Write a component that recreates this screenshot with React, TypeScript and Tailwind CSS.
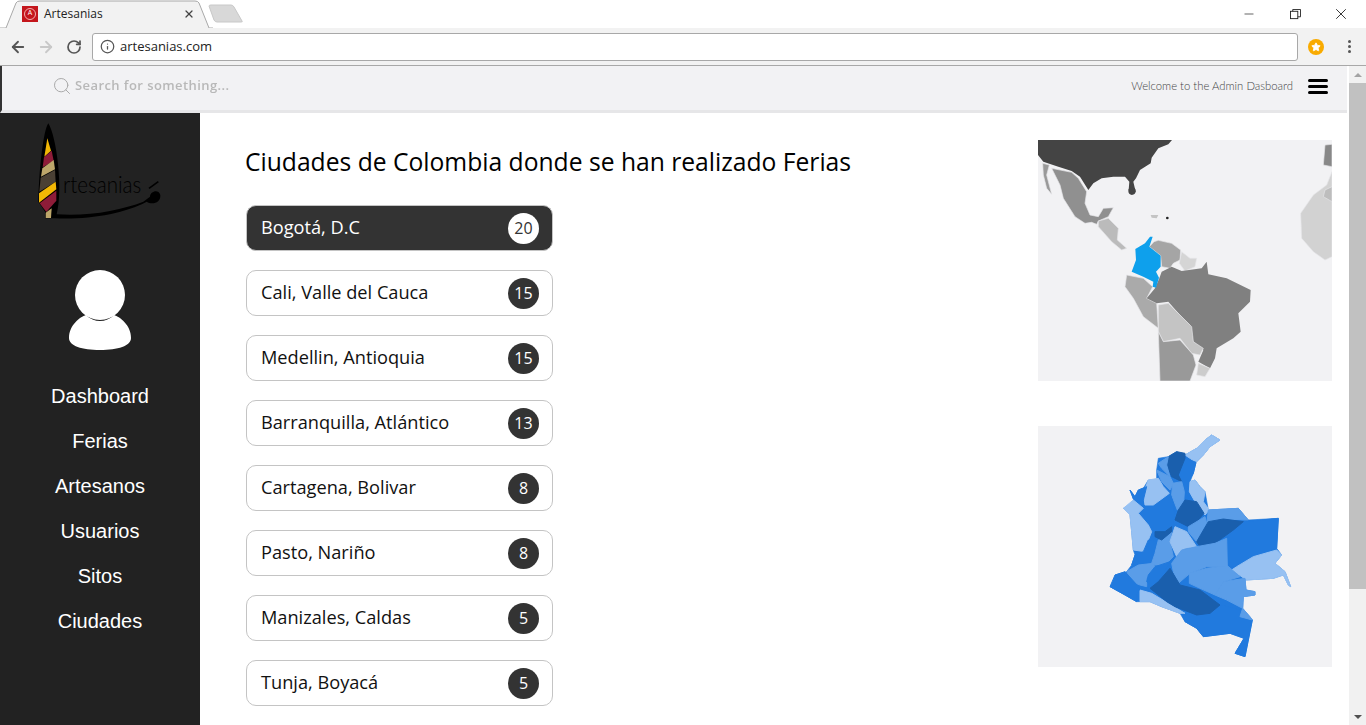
import React from 'react';
import { ArrowLeft, ArrowRight, RotateCw, Info, X, Minus, Search, Star } from 'lucide-react';

const cities = [
  { name: 'Bogotá, D.C', count: 20, active: true },
  { name: 'Cali, Valle del Cauca', count: 15 },
  { name: 'Medellin, Antioquia', count: 15 },
  { name: 'Barranquilla, Atlántico', count: 13 },
  { name: 'Cartagena, Bolivar', count: 8 },
  { name: 'Pasto, Nariño', count: 8 },
  { name: 'Manizales, Caldas', count: 5 },
  { name: 'Tunja, Boyacá', count: 5 },
];

const menu = ['Dashboard', 'Ferias', 'Artesanos', 'Usuarios', 'Sitos', 'Ciudades'];

const DARK = '#1a5fad';
const MID = '#217ade';
const SOFT = '#5a9de8';
const LIGHT = '#97c1f2';

const outline =
  '390,45 365,30 345,45 320,70 285,90 260,80 235,95 205,100 200,135 200,165 175,165 160,190 145,195 135,215 120,195 135,235 100,250 120,270 125,320 130,375 135,390 125,420 110,440 75,450 80,470 60,485 105,510 140,530 180,530 215,545 270,565 285,590 320,610 340,635 420,625 462,640 435,685 465,695 487,585 458,550 460,515 495,510 495,500 468,495 465,465 550,460 580,450 595,480 602,485 585,440 555,415 575,390 560,370 565,280 475,285 445,250 355,255 345,200 330,185 315,165 300,170 310,145 318,112 340,90 360,65';

const regions: [string, string][] = [
  [LIGHT, '390,45 365,30 345,45 320,70 285,90 318,112 340,90 360,65'],
  [MID, '285,100 318,112 310,145 295,170 285,225 270,170 265,150'],
  [DARK, '260,80 285,85 285,100 265,150 275,170 245,155 230,120 235,95'],
  [SOFT, '235,95 230,120 240,155 215,130 205,115'],
  [SOFT, '200,135 240,155 250,175 240,195 215,170'],
  [SOFT, '248,175 275,170 283,200 280,250 262,255 245,210'],
  [LIGHT, '300,170 315,165 330,185 345,200 340,230 358,255 345,270 315,230 298,200'],
  [MID, '215,210 240,205 250,240 255,265 250,300 225,320 195,320 170,290 145,265 165,245'],
  [DARK, '285,225 320,230 342,265 320,290 295,305 255,285 265,255'],
  [LIGHT, '175,165 205,160 220,185 238,205 190,240 165,240 160,205'],
  [MID, '120,195 135,215 145,195 170,185 160,225 135,235'],
  [LIGHT, '130,225 160,250 145,265 175,300 185,320 175,345 165,380 130,375 125,320 120,270 100,250'],
  [MID, '175,345 205,350 195,385 185,415 150,420 125,420 135,390 160,380'],
  [SOFT, '245,320 240,350 250,395 225,420 195,420 185,415 195,385 205,345'],
  [DARK, '195,320 225,320 245,305 245,320 215,345 195,335'],
  [LIGHT, '255,305 290,320 320,365 285,370 260,395 240,350'],
  [SOFT, '295,305 345,275 350,295 320,350 295,320'],
  [SOFT, '355,255 445,250 475,285 400,282 350,300'],
  [MID, '460,290 565,280 560,370 490,395 440,425 412,425 410,340'],
  [DARK, '355,290 400,282 460,290 430,315 375,355 330,365 320,350'],
  [SOFT, '410,340 412,425 350,425 300,445 265,475 250,440 245,415 275,375 320,365 375,355'],
  [LIGHT, '440,425 490,395 560,375 575,390 555,415 585,440 602,485 595,480 580,450 550,460 470,465 425,435'],
  [SOFT, '350,430 412,422 450,455 400,470 375,510 330,490 298,475 298,445'],
  [SOFT, '400,470 465,460 468,495 495,500 495,510 460,515 458,550 410,525 375,510'],
  [MID, '275,565 320,570 360,565 395,540 450,555 487,585 465,695 435,685 462,640 420,625 340,635 320,610 285,590'],
  [LIGHT, '150,495 185,505 235,535 285,565 270,565 215,545 180,530 150,530'],
  [SOFT, '110,440 145,420 190,415 200,440 170,460 170,485 150,480 125,470'],
  [MID, '75,450 105,440 150,490 140,510 140,530 105,510 60,485'],
  [MID, '195,425 240,410 205,470 190,490 170,470 175,450'],
  [DARK, '240,430 270,480 330,495 390,540 360,565 320,570 255,545 230,530 180,490 205,470'],
  [SOFT, '458,550 480,575 487,585 450,575'],
];

function Logo() {
  return (
    <svg viewBox="100 20 390 300" className="w-[130px] h-[100px]">
      <path d="M140,30 C125,50 112,170 110,265 L130,295 L130,315 L160,315 C260,320 370,300 435,265 C450,275 478,270 476,245 C470,225 445,235 445,250 L425,265 C360,290 260,310 165,303 C185,230 165,70 140,30 Z" fill="#000" />
      <path d="M137,75 L148,112 L128,130 Z" fill="#f2b705" />
      <path d="M127,132 L150,112 L156,142 L123,162 Z" fill="#8e1c38" />
      <path d="M122,165 L156,140 L160,168 L118,190 Z" fill="#bda66a" />
      <path d="M117,193 L160,170 L162,205 L113,235 Z" fill="#4a4034" />
      <path d="M112,240 L162,205 L164,228 L112,268 Z" fill="#f2b705" />
      <path d="M114,270 L164,232 L164,262 L134,296 Z" fill="#8e1c38" />
      <path d="M132,298 L150,285 L148,314 L132,314 Z" fill="#bda66a" />
      <text x="184" y="240" fill="#000" fontSize="72" textLength="235" lengthAdjust="spacingAndGlyphs" fontFamily="'Lato', sans-serif" fontWeight="300">rtesanias</text>
      <path d="M442,225 L470,205" stroke="#000" strokeWidth="5" />
    </svg>
  );
}

function WorldMap() {
  return (
    <svg viewBox="24 15 882 723" className="w-[294px] h-[241px] bg-[#f2f2f4] block">
      <g className="blur-[0.5px]" stroke="#e6e6e8" strokeWidth="2">
        <path d="M24,15 L426,15 L415,28 L385,40 L365,68 L362,85 L330,105 L318,130 L310,140 L317,170 L305,180 L296,165 L298,140 L285,125 L250,125 L215,130 L190,145 L175,165 L150,125 L125,108 L85,95 L40,80 L24,60 Z" fill="#444" stroke="none" />
        <path d="M65,100 L125,112 L145,130 L170,170 L165,205 L180,240 L205,245 L220,220 L250,218 L235,245 L205,258 L200,268 L185,262 L165,265 L135,245 L100,190 L90,150 Z" fill="#909090" />
        <path d="M38,85 L58,90 L50,120 L65,178 L50,160 L40,120 Z" fill="#999" />
        <path d="M205,258 L235,250 L265,280 L262,315 L290,340 L275,345 L245,320 L205,275 Z" fill="#bbb" />
        <path d="M372,320 L385,316 L425,325 L452,345 L450,375 L430,385 L420,400 L395,395 L392,362 L358,335 Z" fill="#a5a5a5" />
        <path d="M455,350 L480,370 L500,370 L495,395 L465,408 L448,385 Z" fill="#d5d5d5" />
        <path d="M290,420 L340,430 L368,455 L350,490 L380,505 L385,580 L340,545 L310,490 L285,455 Z" fill="#aaa" />
        <path d="M395,410 L425,395 L455,408 L515,400 L530,380 L535,418 L590,430 L662,465 L660,500 L625,535 L632,590 L610,610 L560,640 L555,670 L540,700 L505,680 L520,645 L490,620 L480,570 L450,540 L415,500 L380,505 L350,490 L375,460 L388,430 Z" fill="#808080" stroke="none" />
        <path d="M385,510 L415,505 L450,540 L485,575 L490,620 L520,640 L510,660 L485,655 L450,610 L400,620 L385,590 Z" fill="#c4c4c4" />
        <path d="M385,590 L400,620 L450,615 L490,660 L498,690 L480,738 L390,738 Z" fill="#999" />
        <path d="M505,685 L540,700 L525,725 L500,720 Z" fill="#ccc" />
        <path d="M360,305 L368,305 L358,335 L392,362 L392,395 L378,410 L387,428 L378,458 L368,455 L370,440 L340,425 L305,410 L318,375 L316,342 L345,325 Z" fill="#0ea0ec" stroke="none" />
        <path d="M906,110 L906,365 L885,375 L850,350 L815,310 L812,235 L850,180 L890,150 Z" fill="#d2d2d2" />
        <path d="M906,155 L885,165 L880,185 L906,200 Z" fill="#bdbdbd" />
        <path d="M885,30 L906,28 L906,95 L880,90 Z" fill="#888" />
        <path d="M362,240 L385,240 L380,250 L365,248 Z" fill="#c4c4c4" stroke="none" />
        <circle cx="412" cy="249" r="4" fill="#222" stroke="none" />
        <circle cx="306" cy="168" r="11" fill="#444" stroke="none" />
      </g>
    </svg>
  );
}

function ColombiaMap() {
  return (
    <svg viewBox="-156 3 882 723" className="w-[294px] h-[241px] bg-[#f2f2f4] block">
      <g className="blur-[0.3px]" strokeLinejoin="round">
        <polygon points={outline} fill={MID} stroke={MID} strokeWidth="2" />
        {regions.map(([fill, points], i) => (
          <polygon key={i} points={points} fill={fill} stroke={fill} strokeWidth="3" />
        ))}
      </g>
    </svg>
  );
}

function BrowserChrome() {
  return (
    <>
      <div className="h-[28px] bg-white flex items-end relative shrink-0">
        <div className="relative w-[213px] h-[28px] flex items-center pl-[22px] pr-[18px]">
          <svg viewBox="0 0 213 28" className="absolute inset-0 w-[213px] h-[28px]">
            <path d="M0,28 L6,28 L16,3 Q17,1 20,1 L195,1 Q198,1 199,3 L209,28 L213,28" fill="#f2f2f2" stroke="#a8a8a8" />
          </svg>
          <span className="relative w-[16px] h-[16px] bg-[#c4161c] flex items-center justify-center">
            <span className="w-[12px] h-[12px] rounded-full border border-[#f3b0b0] text-[7px] leading-none text-white text-center">A</span>
          </span>
          <span className="relative ml-[6px] text-[12px] text-[#222] font-['Open_Sans',sans-serif] flex-1">Artesanias</span>
          <X className="relative w-[12px] h-[12px] text-[#444]" strokeWidth={2.5} />
        </div>
        <svg viewBox="0 0 36 20" className="w-[36px] h-[20px] mb-[4px] -ml-[5px]">
          <path d="M1,2 Q1,1 3,1 L23,1 Q25,1 26,3 L34,17 Q35,18 33,18 L9,18 Q7,18 6,16 Z" fill="#d8d8d8" stroke="#c8c8c8" />
        </svg>
        <div className="absolute right-0 top-0 h-[28px] flex items-center text-[#222] pr-[2px]">
          <div className="w-[46px] flex justify-center"><Minus className="w-[14px] h-[14px]" strokeWidth={1.2} /></div>
          <div className="w-[46px] flex justify-center">
            <svg viewBox="0 0 12 12" className="w-[11px] h-[11px]" fill="none" stroke="#222">
              <rect x="0.5" y="2.5" width="8" height="8" />
              <path d="M3,2.5 V0.5 H11.5 V8.5 H8.5" />
            </svg>
          </div>
          <div className="w-[46px] flex justify-center"><X className="w-[18px] h-[18px]" strokeWidth={1.2} /></div>
        </div>
      </div>
      <div className="h-[39px] shrink-0 bg-[#f2f2f2] border-t border-b border-[#a8a8a8] -mt-px flex items-center pl-[9px] pr-[15px]">
        <ArrowLeft className="w-[18px] h-[18px] text-[#555]" strokeWidth={2.4} />
        <ArrowRight className="w-[18px] h-[18px] text-[#c8c8c8] ml-[10px]" strokeWidth={2.4} />
        <RotateCw className="w-[16px] h-[16px] text-[#555] ml-[11px]" strokeWidth={2.6} />
        <div className="ml-[10px] h-[28px] w-[1206px] bg-white border border-[#a8a8a8] rounded-[3px] flex items-center pl-[7px]">
          <Info className="w-[15px] h-[15px] text-[#555]" strokeWidth={2} />
          <span className="ml-[5px] text-[13px] text-[#222] font-['Open_Sans',sans-serif]">artesanias.com</span>
        </div>
        <div className="ml-[10px] w-[16px] h-[16px] rounded-full bg-[#f9ab00] flex items-center justify-center">
          <Star className="w-[10px] h-[10px] text-white" fill="white" />
        </div>
        <div className="ml-auto flex flex-col gap-[2px]">
          <span className="w-[3px] h-[3px] rounded-full bg-[#555]" />
          <span className="w-[3px] h-[3px] rounded-full bg-[#555]" />
          <span className="w-[3px] h-[3px] rounded-full bg-[#555]" />
        </div>
      </div>
    </>
  );
}

export default function App() {
  return (
    <div className="w-[1366px] h-[725px] overflow-hidden flex flex-col bg-white font-['Open_Sans',sans-serif]">
      <BrowserChrome />
      <div className="flex-1 flex min-h-0">
        <div className="flex-1 flex flex-col min-w-0">
          <header className="h-[47px] shrink-0 bg-[#f2f2f4] border-b-[3px] border-[#e6e6e8] border-l-2 border-l-[#333] flex items-center pl-[50px] pr-[19px] pb-[4px]">
            <Search className="w-[20px] h-[20px] text-[#aaa]" strokeWidth={1.2} />
            <span className="ml-[3px] text-[13px] tracking-[0.42px] font-semibold text-[#b8b8b8] blur-[0.3px]">Search for something...</span>
            <span className="ml-auto text-[11.3px] text-[#444] font-['Lato',sans-serif] font-light">Welcome to the Admin Dasboard</span>
            <div className="ml-[15px] flex flex-col gap-[3px]">
              <span className="w-[20px] h-[3px] rounded-full bg-black" />
              <span className="w-[20px] h-[3px] rounded-full bg-black" />
              <span className="w-[20px] h-[3px] rounded-full bg-black" />
            </div>
          </header>
          <div className="flex-1 flex min-h-0">
            <aside className="w-[200px] shrink-0 bg-[#222] flex flex-col items-center">
              <div className="mt-[7px] h-[100px]"><Logo /></div>
              <svg viewBox="0 0 64 80" className="w-[64px] h-[80px] mt-[50px]">
                <circle cx="32" cy="25" r="25" fill="#fff" />
                <path d="M1,68 C1,55 12,47 18,45 C26,53 38,53 46,45 C52,47 63,55 63,68 C63,76 50,80 32,80 C14,80 1,76 1,68 Z" fill="#fff" />
              </svg>
              <nav className="mt-[33px] flex flex-col items-center gap-[18px] font-['Liberation_Sans',sans-serif] text-[20px] leading-[27px] text-white">
                {menu.map((item) => <a key={item}>{item}</a>)}
              </nav>
            </aside>
            <main className="flex-1 flex justify-between pl-[45px] pr-[15px] pt-[27px] min-w-0">
              <div>
                <h1 className="text-[24.65px] leading-[32px] text-black mt-[6px] mb-[27px]">Ciudades de Colombia donde se han realizado Ferias</h1>
                <ul className="ml-px flex flex-col gap-[19px] w-[307px]">
                  {cities.map((c) => (
                    <li
                      key={c.name}
                      className={c.active
                        ? 'h-[46px] rounded-[10px] border border-[#c4c4c4] bg-[#333] text-white flex items-center pl-[14px] pr-[13px] text-[18.2px]'
                        : 'h-[46px] rounded-[10px] border border-[#c4c4c4] bg-white text-[#111] flex items-center pl-[14px] pr-[13px] text-[18.2px]'}
                    >
                      <span className="flex-1">{c.name}</span>
                      <span className={c.active
                        ? 'w-[31px] h-[31px] rounded-full bg-white text-[#333] text-[16px] flex items-center justify-center'
                        : 'w-[31px] h-[31px] rounded-full bg-[#333] text-white text-[16px] flex items-center justify-center'}>{c.count}</span>
                    </li>
                  ))}
                </ul>
              </div>
              <div className="flex flex-col gap-[45px]">
                <WorldMap />
                <ColombiaMap />
              </div>
            </main>
          </div>
        </div>
        <div className="w-[17px] shrink-0 ml-[2px] bg-[#f1f1f1] flex flex-col items-center">
          <div className="h-[17px] flex items-center justify-center">
            <span className="w-0 h-0 border-l-[4px] border-r-[4px] border-b-[4px] border-l-transparent border-r-transparent border-b-[#a3a3a3]" />
          </div>
          <div className="w-full h-[506px] bg-[#c1c1c1]" />
          <div className="mt-auto h-[17px] flex items-center justify-center">
            <span className="w-0 h-0 border-l-[4px] border-r-[4px] border-t-[4px] border-l-transparent border-r-transparent border-t-[#505050]" />
          </div>
        </div>
      </div>
    </div>
  );
}
